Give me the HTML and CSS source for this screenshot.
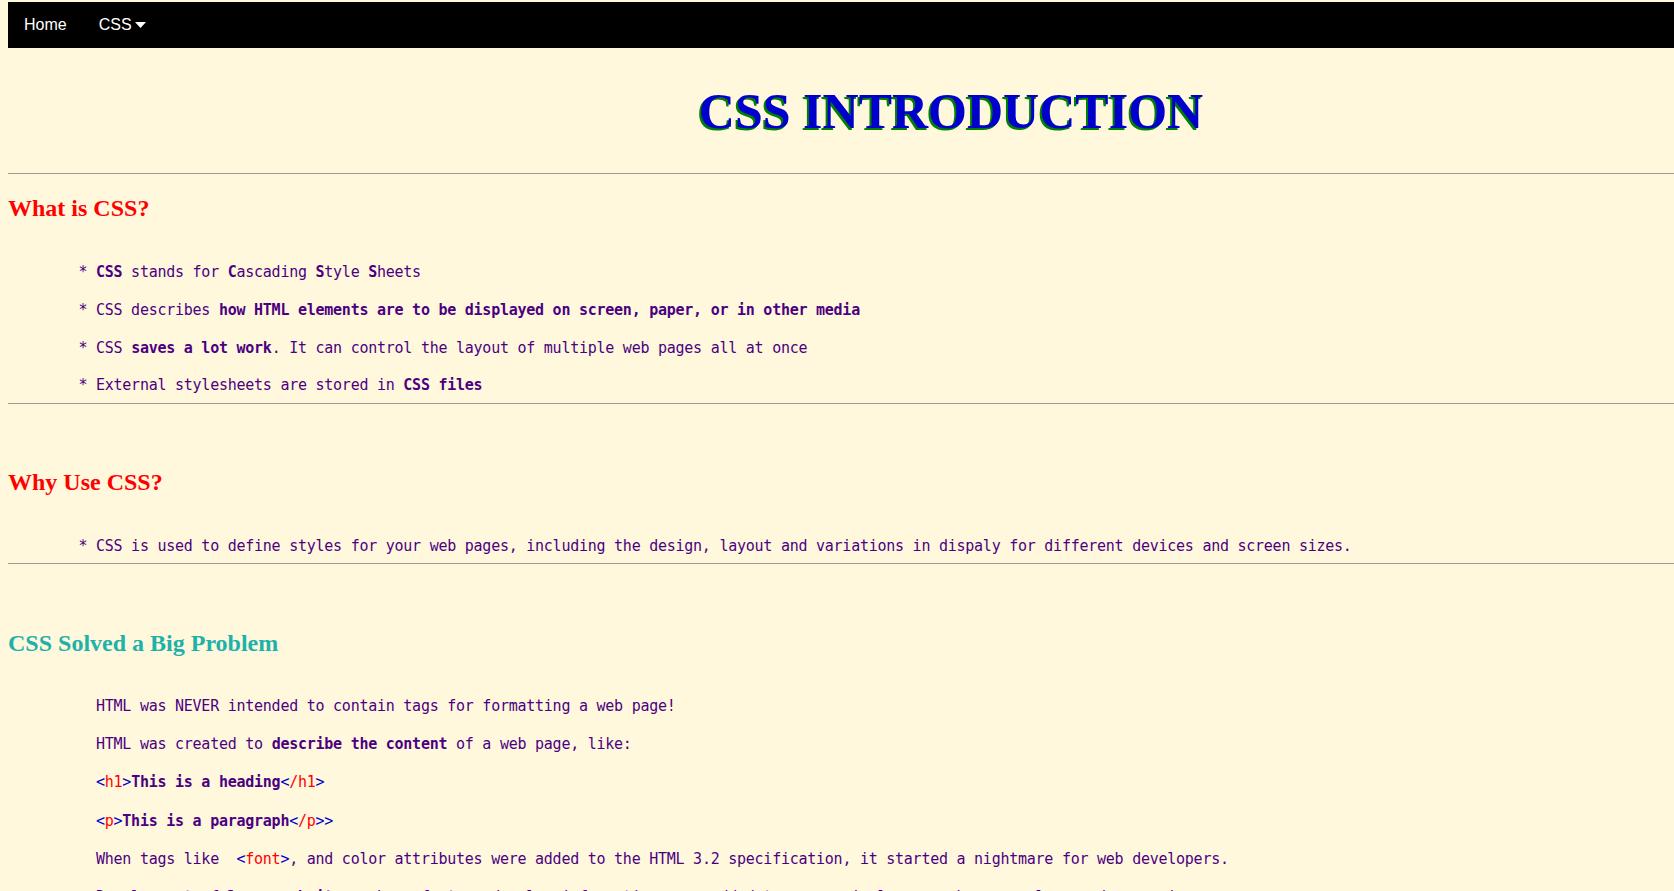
FILE: index.html
```html
<!DOCTYPE html>
<html lang="en">
<head>
<meta charset="utf-8">
<title>CSS Introduction</title>
<link rel="stylesheet" href="styles.css">
</head>
<body>
<nav class="topnav">
  <a class="nav-link" href="#">Home</a>
  <div class="dropdown">
    <span class="nav-link">CSS <svg class="caret" width="11" height="6" viewBox="0 0 11 6" aria-hidden="true"><path d="M0 0 H11 L5.5 6 Z" fill="#fff"/></svg></span>
  </div>
</nav>

<h1 class="page-title">CSS INTRODUCTION</h1>
<hr class="rule">

<section class="topic topic-first">
  <h2 class="topic-title">What is CSS?</h2>
  <ul class="facts">
    <li><b>CSS</b> stands for <b>C</b>ascading <b>S</b>tyle <b>S</b>heets</li>
    <li>CSS describes <b>how HTML elements are to be displayed on screen, paper, or in other media</b></li>
    <li>CSS <b>saves a lot work</b>. It can control the layout of multiple web pages all at once</li>
    <li>External stylesheets are stored in <b>CSS files</b></li>
  </ul>
</section>
<hr class="rule">

<section class="topic">
  <h2 class="topic-title">Why Use CSS?</h2>
  <ul class="facts">
    <li>CSS is used to define styles for your web pages, including the design, layout and variations in dispaly for different devices and screen sizes.</li>
  </ul>
</section>
<hr class="rule">

<section class="topic">
  <h2 class="topic-title topic-teal">CSS Solved a Big Problem</h2>
  <div class="story">
    <p>HTML was NEVER intended to contain tags for formatting a web page!</p>
    <p>HTML was created to <b>describe the content</b> of a web page, like:</p>
    <p><span class="br">&lt;</span><span class="tag">h1</span><span class="br">&gt;</span><b>This is a heading</b><span class="br">&lt;</span><span class="tag">/h1</span><span class="br">&gt;</span></p>
    <p><span class="br">&lt;</span><span class="tag">p</span><span class="br">&gt;</span><b>This is a paragraph</b><span class="br">&lt;</span><span class="tag">/p</span><span class="br">&gt;&gt;</span></p>
    <p>When tags like &nbsp;<span class="br">&lt;</span><span class="tag">font</span><span class="br">&gt;</span>, and color attributes were added to the HTML 3.2 specification, it started a nightmare for web developers.</p>
    <p>Development of <b>large websites</b>, where fonts and color information were added to every single page, became a long and expensive process.</p>
  </div>
</section>
</body>
</html>
```

FILE: styles.css
```css
html, body {
  background: #fff8dc;
}

body {
  margin: 0;
  padding: 2px 0 0 8px;
  font-family: "DejaVu Sans Mono", "Liberation Mono", monospace;
  color: #4b0082;
}

.topnav {
  display: flex;
  background: #000;
}

.nav-link {
  display: flex;
  align-items: center;
  padding: 14px 16px;
  font-family: "Liberation Sans", Arial, sans-serif;
  font-size: 16px;
  line-height: 18.4px;
  color: #fff;
  text-decoration: none;
  white-space: pre;
}

.caret {
  display: block;
  margin-left: -1px;
}

.page-title {
  margin: 34px 0 33px;
  padding-left: 220px;
  text-align: center;
  font-family: "Liberation Serif", "Times New Roman", serif;
  font-size: 50px;
  line-height: 58px;
  font-weight: bold;
  color: #0000cd;
  text-shadow: -2px 2px 0 #008000;
}

.rule {
  margin: 0;
  border: 0;
  border-top: 1px solid #9a9a9a;
  height: 0;
}

.topic-title {
  margin: 64.5px 0 0;
  font-family: "Liberation Serif", "Times New Roman", serif;
  font-size: 24px;
  line-height: 28px;
  font-weight: bold;
  color: #ff0000;
}

.topic-first .topic-title {
  margin-top: 20px;
}

.topic-teal {
  color: #20b2aa;
}

.facts {
  margin: 39.5px 0 7.5px;
  padding: 0 0 0 88px;
  list-style-type: "* ";
}

.facts li,
.story p {
  margin: 0 0 17.8px;
  font-size: 15px;
  line-height: 20px;
  letter-spacing: -0.25px;
}

.story p {
  margin-bottom: 18.1px;
}

.facts li:last-child {
  margin-bottom: 0;
}

.story {
  margin: 39.5px 0 0;
  padding-left: 88px;
}

b {
  font-weight: bold;
}

.br {
  color: #0000cd;
}

.tag {
  color: #ff0000;
}
```
